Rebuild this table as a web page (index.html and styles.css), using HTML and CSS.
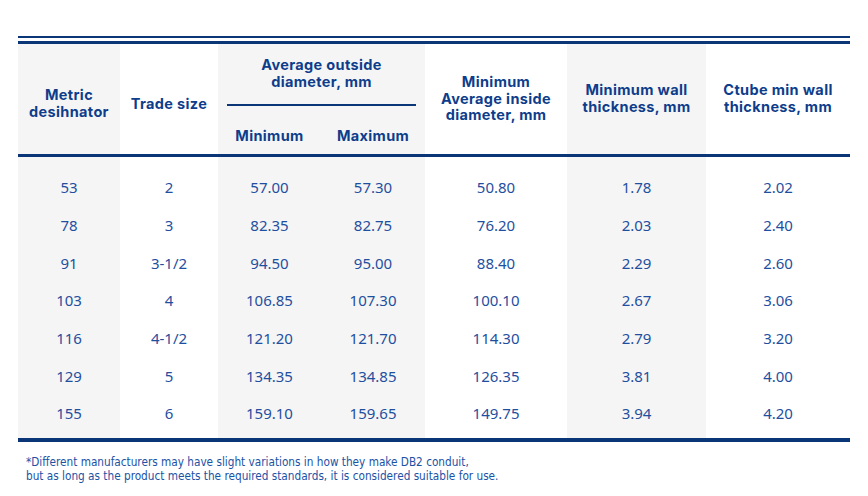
FILE: index.html
```html
<!DOCTYPE html>
<html lang="en">
<head>
<meta charset="utf-8">
<title>DB2 conduit dimensions</title>
<link rel="stylesheet" href="styles.css">
</head>
<body>
<main class="page">
  <div class="table-wrap">
    <table class="spec">
      <colgroup>
        <col class="c-metric shade">
        <col class="c-trade">
        <col class="c-min shade">
        <col class="c-max shade">
        <col class="c-inside">
        <col class="c-wall shade">
        <col class="c-ctube">
      </colgroup>
      <thead>
        <tr>
          <th rowspan="2" class="lowered">Metric<br>desihnator</th>
          <th rowspan="2" class="lowered">Trade size</th>
          <th colspan="2" class="group"><div class="group-label">Average outside<br>diameter, mm</div></th>
          <th rowspan="2">Minimum<br>Average inside<br>diameter, mm</th>
          <th rowspan="2">Minimum wall<br>thickness, mm</th>
          <th rowspan="2">Ctube min wall<br>thickness, mm</th>
        </tr>
        <tr>
          <th class="sub">Minimum</th>
          <th class="sub">Maximum</th>
        </tr>
      </thead>
      <tbody>
        <tr><td>53</td><td>2</td><td>57.00</td><td>57.30</td><td>50.80</td><td>1.78</td><td>2.02</td></tr>
        <tr><td>78</td><td>3</td><td>82.35</td><td>82.75</td><td>76.20</td><td>2.03</td><td>2.40</td></tr>
        <tr><td>91</td><td>3-1/2</td><td>94.50</td><td>95.00</td><td>88.40</td><td>2.29</td><td>2.60</td></tr>
        <tr><td>103</td><td>4</td><td>106.85</td><td>107.30</td><td>100.10</td><td>2.67</td><td>3.06</td></tr>
        <tr><td>116</td><td>4-1/2</td><td>121.20</td><td>121.70</td><td>114.30</td><td>2.79</td><td>3.20</td></tr>
        <tr><td>129</td><td>5</td><td>134.35</td><td>134.85</td><td>126.35</td><td>3.81</td><td>4.00</td></tr>
        <tr><td>155</td><td>6</td><td>159.10</td><td>159.65</td><td>149.75</td><td>3.94</td><td>4.20</td></tr>
      </tbody>
    </table>
  </div>
  <p class="note">*Different manufacturers may have slight variations in how they make DB2 conduit,<br>but as long as the product meets the required standards, it is considered suitable for use.</p>
</main>
</body>
</html>
```

FILE: styles.css
```css
html, body {
  margin: 0;
  padding: 0;
  background: #ffffff;
}

.page {
  padding: 36px 0 0 18px;
  width: 832px;
}

.table-wrap {
  width: 832px;
  border-top: 2px solid #0a3577;
  padding-top: 3px;
}

.spec {
  width: 832px;
  table-layout: fixed;
  border-collapse: separate;
  border-spacing: 0;
  border-top: 3px solid #0a3577;
  border-bottom: 4px solid #0a3577;
}

.shade { background: #f5f5f5; }
.c-metric { width: 102px; }
.c-trade { width: 98px; }
.c-min { width: 103px; }
.c-max { width: 104px; }
.c-inside { width: 142px; }
.c-wall { width: 139px; }
.c-ctube { width: 144px; }

.spec th {
  font-family: Inter, "Open Sans", sans-serif;
  font-weight: 700;
  font-size: 14.5px;
  letter-spacing: 0.35px;
  line-height: 16.5px;
  color: #0d3d8b;
  text-align: center;
  vertical-align: middle;
  padding: 0;
}

.spec th[rowspan] {
  border-bottom: 3px solid #0a3577;
}

.spec th.lowered {
  padding-top: 10px;
}

.spec th.group {
  padding: 13px 9px 0;
}

.group-label {
  padding-bottom: 14px;
  border-bottom: 2px solid #0a3577;
}

.spec th.sub {
  padding: 22px 0 9px;
  border-bottom: 3px solid #0a3577;
}

.spec td {
  font-family: "Noto Sans", "Open Sans", sans-serif;
  font-weight: 400;
  font-size: 15px;
  line-height: 20px;
  color: #1f4f9f;
  text-align: center;
  padding: 8.83px 0;
}

.spec tbody tr:first-child td { padding-top: 20.83px; }
.spec tbody tr:last-child td { padding-bottom: 14.83px; }

.note {
  margin: 14px 0 0 8px;
  font-family: "DejaVu Sans", sans-serif;
  font-stretch: condensed;
  font-size: 11.7px;
  line-height: 13.5px;
  color: #1b52a5;
}
```
